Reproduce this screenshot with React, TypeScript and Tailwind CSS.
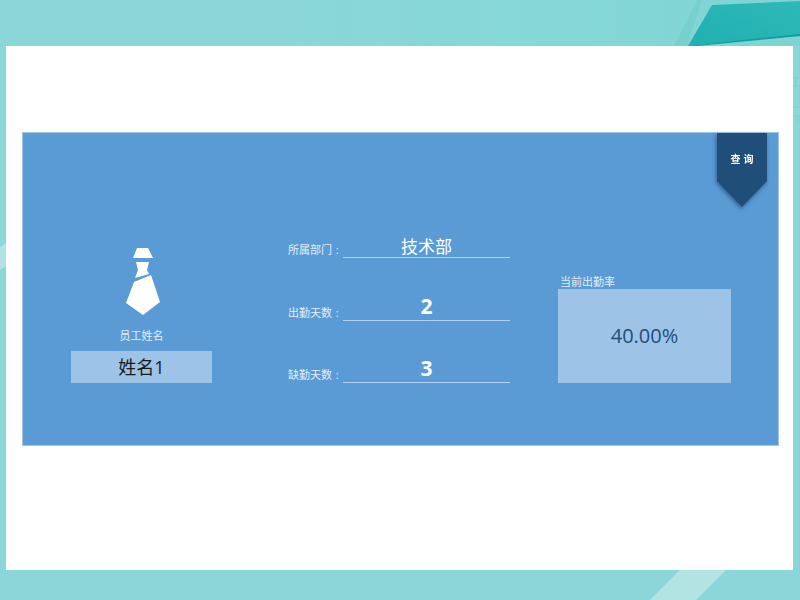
import React from "react";

const cjk = "font-['Open_Sans','Noto_Sans_CJK_SC',sans-serif]";

function Background() {
  return (
    <svg className="absolute inset-0" width="800" height="600" viewBox="0 0 800 600">
      <defs>
        <linearGradient id="topGlow" x1="0" y1="0" x2="1" y2="0">
          <stop offset="0" stopColor="#8ad6d8" />
          <stop offset="0.5" stopColor="#86d8d8" />
          <stop offset="1" stopColor="#7fd3d3" />
        </linearGradient>
        <linearGradient id="teal" x1="0" y1="1" x2="1" y2="0">
          <stop offset="0" stopColor="#1fb0b0" />
          <stop offset="1" stopColor="#2fb9b8" />
        </linearGradient>
      </defs>
      <rect x="300" y="0" width="500" height="46" fill="url(#topGlow)" />
      <polygon points="674,46 697,0 702,0 687,46" fill="#76d1ce" />
      <polygon points="688,46 712,5 800,1 800,35" fill="url(#teal)" />
      <polygon points="688,46 800,34 800,36 697,46" fill="#0f9f9f" />
      <polygon points="0,247 6,243 6,266 0,270" fill="#b2e3e4" />
      <polygon points="650,600 680,570 726,570 696,600" fill="#b2e4e4" />
      <g stroke="#7fcfd0" strokeWidth="1" fill="none">
        <path d="M793 78h7M793 86h7M793 107h7M793 116h7M796 78v8M798 116v7" />
      </g>
    </svg>
  );
}

function Tie() {
  return (
    <svg width="36" height="70" viewBox="0 0 36 70" className="ml-[3px] block">
      <polygon points="12,1 23,1 28,11 8,11" fill="#fff" />
      <polygon points="11,15 24,15 22,23 24,27 10,31 13,23" fill="#fff" />
      <polygon points="9,35 26,28 35,55 18,68 1,56" fill="#fff" />
    </svg>
  );
}

function Row({ label, value, bold }: { label: string; value: string; bold?: boolean }) {
  return (
    <div className="flex items-end">
      <span className="w-[55px] text-[11px] leading-[16px] whitespace-pre text-[#e3edf8]">
        {label} <span className="ml-[1px]">:</span>
      </span>
      <div
        className={
          "h-[30px] flex-1 border-b border-[#b5d0ee] text-center text-white " +
          (bold ? "text-[21px] leading-[30px] font-bold" : "text-[17px] leading-[37px]")
        }
      >
        {value}
      </div>
    </div>
  );
}

export default function App() {
  return (
    <div className={"relative h-[600px] w-[800px] overflow-hidden bg-[#8ad6d8] pt-[46px] pr-[7px] pl-[6px] " + cjk}>
      <Background />
      <div className="relative h-[524px] bg-white pt-[86px] pr-[14px] pl-[16px]">
        <div className="relative flex h-[314px] items-end border border-[#a3c5ea] bg-[#5b9bd5] pb-[62px] pl-[48px]">
          {/* bookmark button */}
          <div className="absolute top-0 right-[11px] drop-shadow-[-1px_2px_2px_rgba(20,50,90,0.55)]">
            <div className="flex h-[74px] w-[50px] justify-center bg-[#1f4e79] pt-[19px] pl-[3px] text-[10px] leading-[15px] font-bold tracking-[3px] text-white [clip-path:polygon(0_0,100%_0,100%_65%,50%_100%,0_65%)]">
              查询
            </div>
          </div>

          <div className="flex w-[141px] flex-col items-center">
            <Tie />
            <span className="mt-[11px] text-[11px] leading-[16px] text-[#e3edf8]">员工姓名</span>
            <div className="mt-[7px] flex h-[32px] w-full items-center justify-center bg-[#9dc3e6] text-[18px] text-[#1a1a1a]">
              姓名1
            </div>
          </div>

          <div className="ml-[76px] flex w-[222px] flex-col gap-[32.5px]">
            <Row label="所属部门" value="技术部" />
            <Row label="出勤天数" value="2" bold />
            <Row label="缺勤天数" value="3" bold />
          </div>

          <div className="ml-[48px] flex w-[173px] flex-col">
            <span className="pl-[2px] text-[11px] leading-[14px] text-[#e3edf8]">当前出勤率</span>
            <div className="flex h-[94px] items-center justify-center bg-[#9dc3e6] text-[20px] text-[#1f4e79]">
              40.00%
            </div>
          </div>
        </div>
      </div>
    </div>
  );
}
